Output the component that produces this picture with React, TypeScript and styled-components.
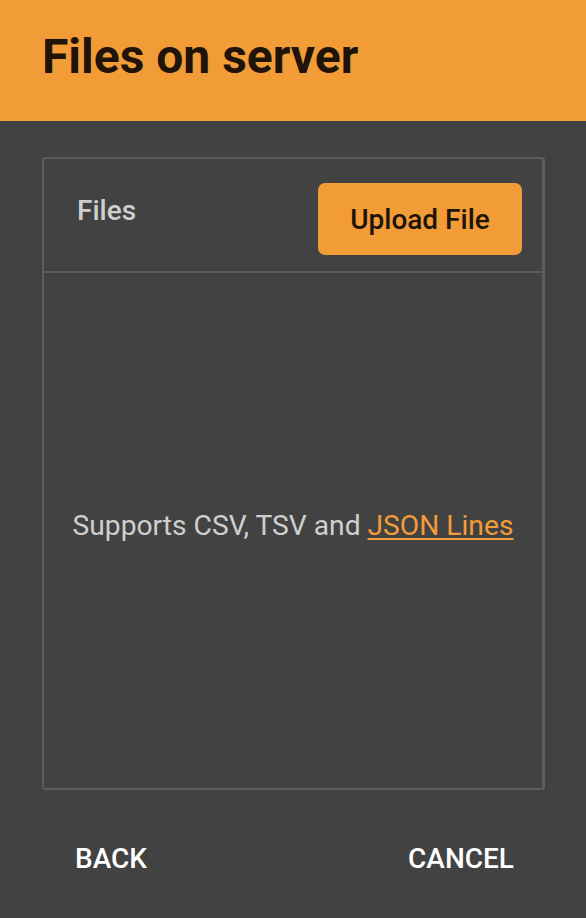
import React from "react";
import styled, { createGlobalStyle } from "styled-components";

const Global = createGlobalStyle`
  html, body { margin: 0; padding: 0; background: #424242; }
  body { font-family: Roboto, "Liberation Sans", sans-serif; }
  * { box-sizing: border-box; }
`;

const Dialog = styled.div`
  width: 586px;
  height: 918px;
  background: #424242;
  display: flex;
  flex-direction: column;
`;

const Header = styled.header`
  height: 121px;
  background: #f29c38;
  padding: 27px 42px 0;
`;

const Title = styled.h1`
  margin: 0;
  font-size: 48px;
  line-height: 60px;
  font-weight: 700;
  color: #20140a;
`;

const Body = styled.main`
  padding: 36px 41px 0 42px;
`;

const Card = styled.section`
  height: 633px;
  border: 2px solid #5c5c5c;
  border-right-width: 3px;
  border-radius: 3px;
  display: flex;
  flex-direction: column;
`;

const CardHeader = styled.div`
  height: 114px;
  border-bottom: 2px solid #5c5c5c;
  display: flex;
  justify-content: space-between;
  align-items: flex-start;
  padding: 24px 20px 0 33px;
`;

const Label = styled.span`
  margin-top: 12px;
  font-size: 28px;
  line-height: 32px;
  font-weight: 500;
  color: #cfcfcf;
`;

const UploadButton = styled.button`
  width: 204px;
  height: 72px;
  border: none;
  border-radius: 7px;
  background: #f29c38;
  color: #1e140a;
  font-family: inherit;
  font-size: 28px;
  font-weight: 500;
  padding: 0;
  cursor: pointer;
`;

const Empty = styled.div`
  flex: 1;
  display: flex;
  align-items: center;
  justify-content: center;
  padding-bottom: 10px;
  font-size: 28.2px;
  color: #cfcfcf;
`;

const Link = styled.a`
  color: #f29c38;
  text-decoration: underline;
  text-underline-offset: 3px;
`;

const Actions = styled.footer`
  display: flex;
  justify-content: space-between;
  padding: 53px 72px 0 75px;
`;

const ActionButton = styled.button`
  background: none;
  border: none;
  padding: 0;
  font-family: inherit;
  font-size: 28px;
  line-height: 32px;
  font-weight: 500;
  color: #ffffff;
  text-transform: uppercase;
  cursor: pointer;
`;

export default function App() {
  return (
    <>
      <Global />
      <Dialog>
        <Header>
          <Title>Files on server</Title>
        </Header>
        <Body>
          <Card>
            <CardHeader>
              <Label>Files</Label>
              <UploadButton>Upload File</UploadButton>
            </CardHeader>
            <Empty>
              <span>
                Supports CSV, TSV and <Link href="#">JSON Lines</Link>
              </span>
            </Empty>
          </Card>
        </Body>
        <Actions>
          <ActionButton>Back</ActionButton>
          <ActionButton>Cancel</ActionButton>
        </Actions>
      </Dialog>
    </>
  );
}
